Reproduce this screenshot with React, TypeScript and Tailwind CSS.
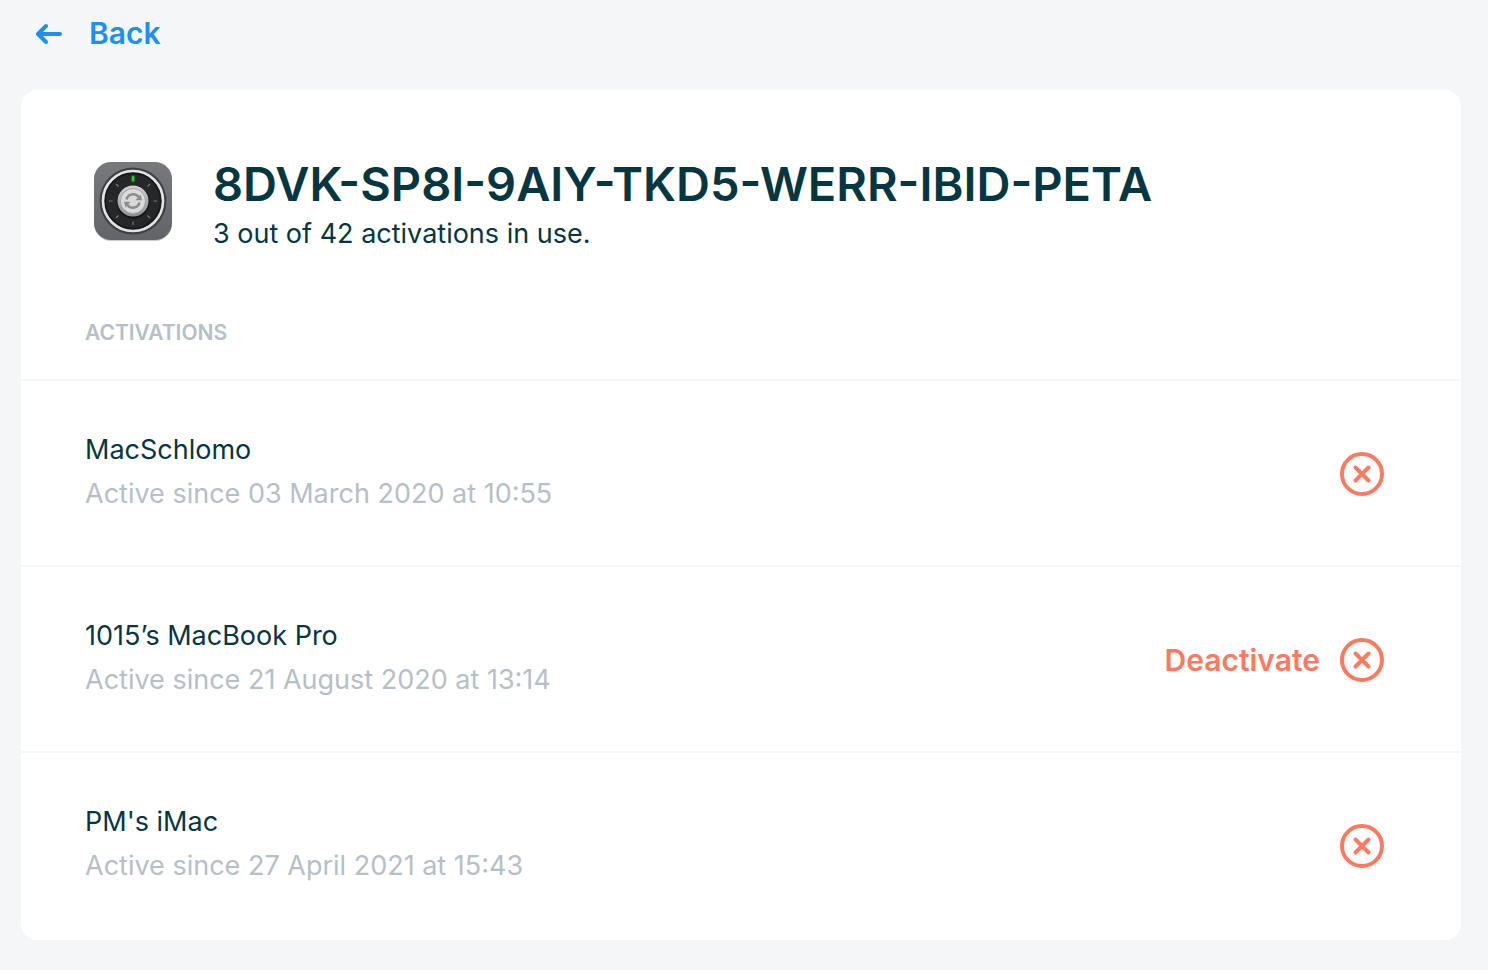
import { useId } from 'react';

const activations = [
  { name: 'MacSchlomo', since: 'Active since 03 March 2020 at 10:55' },
  { name: '1015’s MacBook Pro', since: 'Active since 21 August 2020 at 13:14', expanded: true },
  { name: "PM's iMac", since: 'Active since 27 April 2021 at 15:43' },
];

function BackArrow() {
  return (
    <svg width="28" height="22" viewBox="0 0 28 22" fill="none" stroke="currentColor" strokeWidth="4" strokeLinecap="round" strokeLinejoin="round" aria-hidden="true">
      <path d="M25 12H4M11 4L3 12L11 20" />
    </svg>
  );
}

function CloseCircle() {
  return (
    <svg className="shrink-0" width="44" height="44" viewBox="0 0 44 44" fill="none" stroke="currentColor" strokeWidth="4" strokeLinecap="round" aria-hidden="true">
      <circle cx="22" cy="22" r="20" />
      <path d="M15.5 15.5L28.5 28.5M28.5 15.5L15.5 28.5" />
    </svg>
  );
}

function AppIcon() {
  const id = useId();
  const ticks = [45, 90, 135, 180, 225, 270, 315];
  return (
    <svg className="shrink-0" width="96" height="96" viewBox="0 0 96 96" role="img" aria-label="App icon">
      <defs>
        <linearGradient id={`${id}body`} x1="0" y1="0" x2="0" y2="1">
          <stop offset="0" stopColor="#77797d" />
          <stop offset="1" stopColor="#626468" />
        </linearGradient>
        <linearGradient id={`${id}knob`} x1="0" y1="0" x2="0" y2="1">
          <stop offset="0" stopColor="#d2d2d2" />
          <stop offset="1" stopColor="#8e8e8e" />
        </linearGradient>
      </defs>
      <rect x="9" y="10" width="78" height="78" rx="17" fill="#c9cacc" />
      <rect x="9" y="9" width="78" height="78" rx="17" fill={`url(#${id}body)`} />
      <circle cx="48" cy="48" r="33.5" fill="#3e4043" />
      <circle cx="48" cy="48" r="30" fill="#252729" stroke="#e4e4e4" strokeWidth="2.6" />
      <circle cx="48" cy="48" r="27.5" fill="none" stroke="#17181a" strokeWidth="1.5" />
      {ticks.map((angle) => (
        <path key={angle} d="M48 24V27.5" stroke="#74777a" strokeWidth="1.2" transform={`rotate(${angle} 48 48)`} />
      ))}
      <rect x="45.5" y="22" width="5" height="7.500" rx="2" fill="#16521b" />
      <rect x="46.8" y="23" width="2.6" height="5.5" rx="1" fill="#32c832" />
      <circle cx="48" cy="49" r="16.5" fill="#111213" />
      <circle cx="48" cy="48" r="15.5" fill={`url(#${id}knob)`} />
      <circle cx="48" cy="48" r="12.5" fill="#dadada" stroke="#a5a5a5" strokeWidth="1" />
      <g fill="none" stroke="#8c8c8c" strokeWidth="2.6">
        <path d="M41.5 46.5A6.8 6.8 0 0 1 53.5 44" />
        <path d="M54.5 49.5A6.8 6.8 0 0 1 42.5 52" />
      </g>
      <path d="M50.5 47.3H57L55.5 41.5ZM45.5 48.7H39L40.5 54.5Z" fill="#8c8c8c" />
    </svg>
  );
}

export default function App() {
  return (
    <div className="min-h-screen bg-[#f5f6f8] pl-[21px] pr-[27px] pb-[30px] font-[Inter,sans-serif] text-[#06363f]">
      <nav className="flex h-[90px] items-start pl-[14px] pt-[13px]">
        <a href="#licenses" className="flex items-center gap-[26px] text-[30px] leading-[40px] font-semibold text-[#1e8ff5]">
          <BackArrow />
          Back
        </a>
      </nav>

      <main className="overflow-hidden rounded-2xl bg-white">
        <header className="px-[64px] pt-[63px] pb-[32px]">
          <div className="flex gap-[32px]">
            <AppIcon />
            <div>
              <h1 className="text-[47px] leading-[61px] font-semibold">8DVK-SP8I-9AIY-TKD5-WERR-IBID-PETA</h1>
              <p className="text-[27px] leading-[40px]">3 out of 42 activations in use.</p>
            </div>
          </div>
          <h2 className="mt-[65px] text-[21px] leading-[28px] font-semibold text-[#b6bfc6] uppercase">Activations</h2>
        </header>

        <ul>
          {activations.map((item) => (
            <li key={item.name} className="flex items-center justify-between border-t-2 border-[#f4f6f8] pt-[47px] pb-[49px] pl-[64px] pr-[77px] last:pb-[52px]">
              <div className="text-[27px] leading-[44px]">
                <p>{item.name}</p>
                <p className="text-[#b6bfc6]">{item.since}</p>
              </div>
              <button type="button" aria-label={`Deactivate ${item.name}`} className="flex items-center gap-[20px] pt-[4px] text-[30px] leading-[44px] font-semibold text-[#fa7b60]">
                {item.expanded && <span>Deactivate</span>}
                <CloseCircle />
              </button>
            </li>
          ))}
        </ul>
      </main>
    </div>
  );
}
